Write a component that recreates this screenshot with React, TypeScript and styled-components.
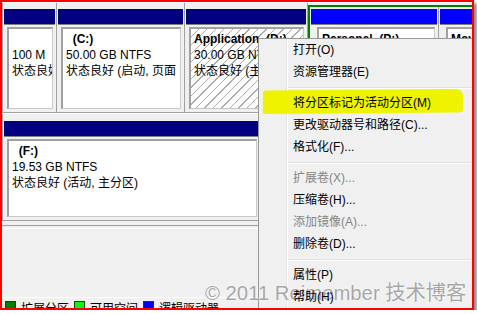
import React from 'react'
import styled, { createGlobalStyle } from 'styled-components'

const GlobalStyle = createGlobalStyle`
  html, body {
    margin: 0;
    background: #fff;
  }
  body {
    font-family: "Liberation Sans", "Noto Sans CJK SC", sans-serif;
    font-size: 12px;
    color: #000;
  }
`

const Frame = styled.div`
  position: relative;
  box-sizing: border-box;
  width: 474px;
  height: 310px;
  border: 2px solid #ff0000;
  background: #f0f0f0;
  box-shadow: 3px 3px 3px rgba(0, 0, 0, 0.45);
  overflow: hidden;
  display: flex;
  flex-direction: column;
`

const TopLine = styled.div`
  flex: none;
  height: 1px;
  background: #fff;
`

const DiskRow = styled.div<{ $h: number; $lineTop?: boolean }>`
  flex: none;
  display: flex;
  box-sizing: border-box;
  height: ${({ $h }) => $h}px;
  border-left: 1px solid #a0a0a0;
  border-bottom: 1px solid #a0a0a0;
  border-top: ${({ $lineTop }) => ($lineTop ? '1px solid #fff' : 'none')};
  overflow: hidden;
`

const Cell = styled.div<{ $w: number; $top?: number }>`
  flex: none;
  width: ${({ $w }) => $w}px;
  padding: ${({ $top }) => $top ?? 6}px 1px 0;
  border-right: 1px solid #a0a0a0;
  display: flex;
  flex-direction: column;
`

const Extended = styled.div`
  flex: none;
  display: flex;
  margin-top: 2px;
  border: 2px solid #008000;
`

const Bar = styled.div<{ $color: string }>`
  flex: none;
  height: 15px;
  background: ${({ $color }) => $color};
  border-bottom: 1px solid #808080;
`

const Body = styled.div<{ $indent?: number }>`
  flex: 1;
  min-height: 0;
  display: flex;
  padding: 2px 2px 3px ${({ $indent }) => $indent ?? 3}px;
`

const Box = styled.div<{ $hatched?: boolean }>`
  flex: 1;
  min-width: 0;
  border-style: solid;
  border-color: #a0a0a0 #c8c8c8 #c8c8c8 #a0a0a0;
  border-width: 2px 1px 1px 2px;
  padding: 2px 1px 0 3px;
  background: ${({ $hatched }) =>
    $hatched
      ? 'repeating-linear-gradient(135deg, #fff 0 5px, #ababab 5px 6px)'
      : '#fff'};
  overflow: hidden;
  white-space: pre;
  line-height: 16px;
`

const Name = styled.div`
  font-weight: bold;
`

const Gap = styled.div`
  flex: none;
  height: 2px;
  margin-top: 4px;
  border-top: 1px solid #a0a0a0;
  border-bottom: 1px solid #fff;
`

const Spacer = styled.div`
  flex: 1;
`

const Legend = styled.div`
  flex: none;
  height: 7px;
  border-top: 1px solid #fff;
  padding: 3px 0 0 3px;
  display: flex;
  align-items: flex-start;
`

const LegendItem = styled.div`
  display: flex;
  align-items: flex-start;
  margin-right: 5px;
`

const Swatch = styled.span<{ $color: string }>`
  box-sizing: border-box;
  width: 11px;
  height: 11px;
  border: 1px solid #303030;
  background: ${({ $color }) => $color};
  margin-right: 5px;
`

const LegendText = styled.span`
  line-height: 12px;
  margin-top: 2px;
  white-space: nowrap;
`

const Menu = styled.div`
  position: absolute;
  left: 256px;
  top: 36px;
  width: 230px;
  height: 300px;
  background: #f0f0f0;
  border: 1px solid #979797;

  &::before {
    content: '';
    position: absolute;
    left: 27px;
    top: 0;
    bottom: 0;
    width: 1px;
    background: #e2e3e3;
    box-shadow: 1px 0 0 #fff;
  }
`

const MenuItem = styled.div<{ $disabled?: boolean }>`
  position: relative;
  height: 22px;
  line-height: 22px;
  padding-left: 34px;
  white-space: nowrap;
  color: ${({ $disabled }) => ($disabled ? '#858585' : '#000')};
`

const ItemText = styled.span`
  position: relative;
  z-index: 1;
`

const Marker = styled.span`
  position: absolute;
  left: 4px;
  top: -2px;
  width: 200px;
  height: 23px;
  background: #eef400;
  border-radius: 3px 7px 4px 2px;
  transform: rotate(-0.4deg);
  box-shadow: 0 0 1px #eef400;
`

const MenuSep = styled.div`
  margin: 4px 0 3px 29px;
  border-top: 1px solid #e0e0e0;
  border-bottom: 1px solid #fff;
`

const Watermark = styled.div`
  position: absolute;
  left: 203px;
  top: 280px;
  font-size: 20.3px;
  line-height: 22px;
  white-space: nowrap;
  color: rgba(110, 110, 110, 0.6);
  text-shadow: 0 0 2px #fff;
`

type Item = { label: string; disabled?: boolean; marked?: boolean } | 'sep'

const menuItems: Item[] = [
  { label: '打开(O)' },
  { label: '资源管理器(E)' },
  'sep',
  { label: '将分区标记为活动分区(M)', marked: true },
  { label: '更改驱动器号和路径(C)...' },
  { label: '格式化(F)...' },
  'sep',
  { label: '扩展卷(X)...', disabled: true },
  { label: '压缩卷(H)...' },
  { label: '添加镜像(A)...', disabled: true },
  { label: '删除卷(D)...' },
  'sep',
  { label: '属性(P)' },
  { label: '帮助(H)' },
]

const legend = [
  { color: '#008000', text: '扩展分区' },
  { color: '#00ff00', text: '可用空间' },
  { color: '#0000ff', text: '逻辑驱动器' },
]

const App = () => (
  <>
    <GlobalStyle />
    <Frame>
      <TopLine />
      <DiskRow $h={110}>
        <Cell $w={51}>
          <Bar $color="#000080" />
          <Body>
            <Box>
              <div>{' '}</div>
              <div>100 M</div>
              <div>状态良好</div>
            </Box>
          </Body>
        </Cell>
        <Cell $w={125}>
          <Bar $color="#000080" />
          <Body>
            <Box>
              <Name>{'  (C:)'}</Name>
              <div>50.00 GB NTFS</div>
              <div>状态良好 (启动, 页面</div>
            </Box>
          </Body>
        </Cell>
        <Cell $w={120}>
          <Bar $color="#000080" />
          <Body>
            <Box $hatched>
              <Name>{'Application  (D:)'}</Name>
              <div>30.00 GB NTFS</div>
              <div>状态良好 (主分区)</div>
            </Box>
          </Body>
        </Cell>
        <Extended>
          <Cell $w={126} $top={2}>
            <Bar $color="#0000ff" />
            <Body $indent={6}>
              <Box>
                <Name>{'Personal  (P:)'}</Name>
                <div>40.00 GB NTFS</div>
                <div>状态良好 (逻辑驱动器)</div>
              </Box>
            </Body>
          </Cell>
          <Cell $w={80} $top={2}>
            <Bar $color="#0000ff" />
            <Body $indent={6}>
              <Box>
                <Name>{'Movie  (M:)'}</Name>
              </Box>
            </Body>
          </Cell>
        </Extended>
      </DiskRow>
      <DiskRow $h={108} $lineTop>
        <Cell $w={255} $top={7}>
          <Bar $color="#000080" />
          <Body>
            <Box>
              <Name>{'  (F:)'}</Name>
              <div>19.53 GB NTFS</div>
              <div>状态良好 (活动, 主分区)</div>
            </Box>
          </Body>
        </Cell>
      </DiskRow>
      <Gap />
      <Spacer />
      <Legend>
        {legend.map((l) => (
          <LegendItem key={l.text}>
            <Swatch $color={l.color} />
            <LegendText>{l.text}</LegendText>
          </LegendItem>
        ))}
      </Legend>

      <Menu>
        {menuItems.map((it, i) =>
          it === 'sep' ? (
            <MenuSep key={i} />
          ) : (
            <MenuItem key={i} $disabled={it.disabled}>
              {it.marked && <Marker />}
              <ItemText>{it.label}</ItemText>
            </MenuItem>
          )
        )}
      </Menu>
      <Watermark>© 2011 Reimember 技术博客</Watermark>
    </Frame>
  </>
)

export default App
